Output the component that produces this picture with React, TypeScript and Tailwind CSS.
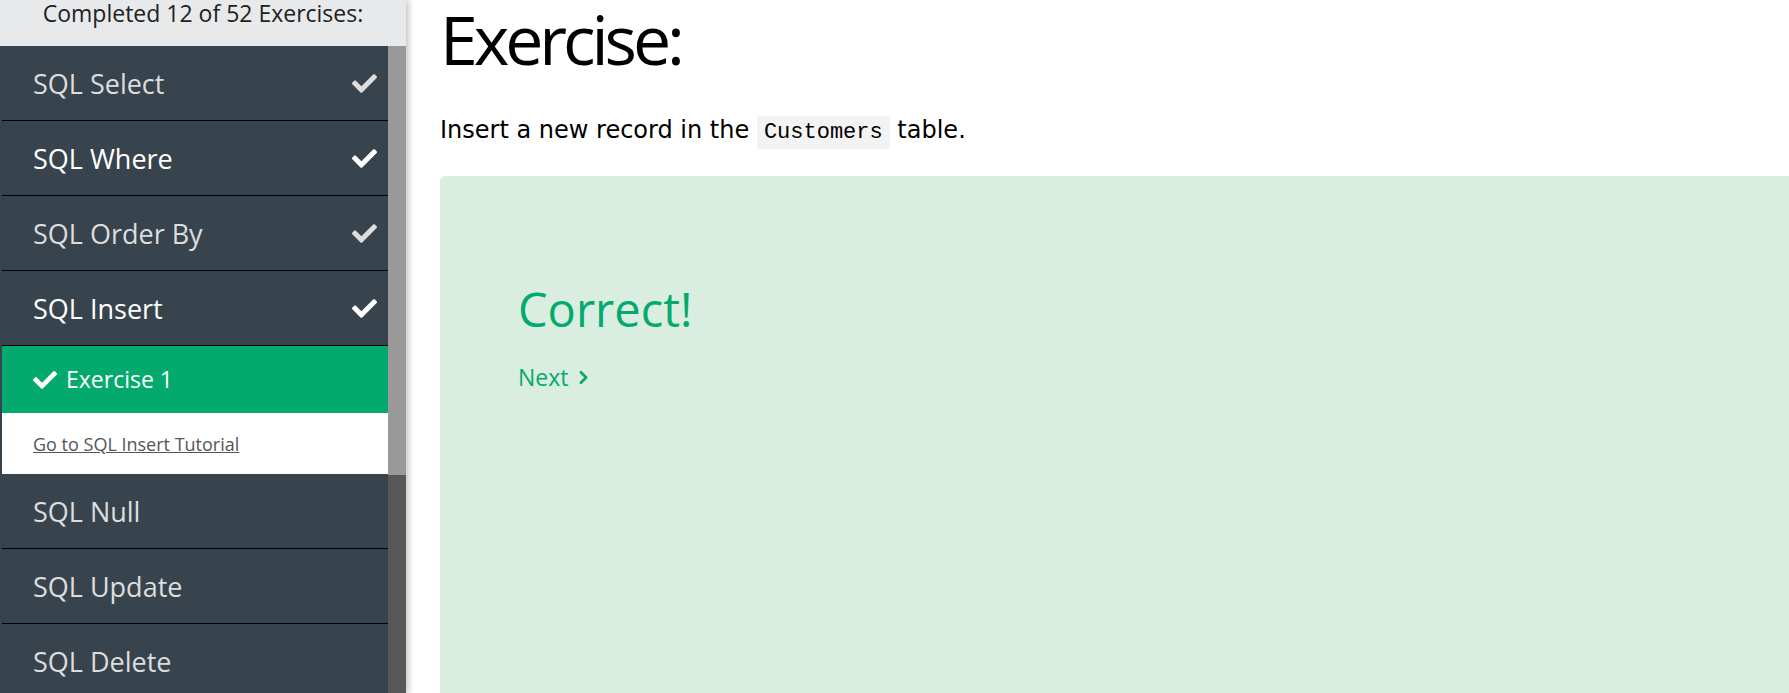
import React from 'react';
import { FaCheck } from 'react-icons/fa';
import { ChevronRight } from 'lucide-react';

const sans = "font-['Open_Sans',sans-serif]";

const chapters = [
  { name: 'SQL Select', done: true, bright: false },
  { name: 'SQL Where', done: true, bright: true },
  { name: 'SQL Order By', done: true, bright: false },
  { name: 'SQL Insert', done: true, bright: true, open: true },
  { name: 'SQL Null', done: false, bright: false },
  { name: 'SQL Update', done: false, bright: false },
  { name: 'SQL Delete', done: false, bright: false },
];

const ChapterRow = ({ chapter }: any) => (
  <div
    className={
      'flex items-center justify-between h-[75px] shrink-0 border-b border-black pl-[31px] pr-[11px] ' +
      (chapter.bright ? 'text-white' : 'text-[#dddddd]')
    }
  >
    <span className="text-[27px] leading-none">{chapter.name}</span>
    {chapter.done && <FaCheck size={25} />}
  </div>
);

export default function App() {
  return (
    <div className={`flex h-[693px] w-full overflow-hidden bg-white ${sans}`}>
      {/* sidebar */}
      <aside className="relative z-10 flex w-[406px] shrink-0 flex-col shadow-[3px_0_6px_rgba(0,0,0,0.22)]">
        <div className="h-[46px] shrink-0 bg-[#e7e9eb] pt-[2px] text-center text-[23px] leading-none text-[#222]">
          Completed 12 of 52 Exercises:
        </div>
        <div className="flex flex-1 min-h-0">
          <div className="flex w-[388px] flex-col bg-[#38444d] pl-[2px]">
            {chapters.map((c) => (
              <React.Fragment key={c.name}>
                <ChapterRow chapter={c} />
                {c.open && (
                  <>
                    <div className="flex h-[67px] shrink-0 items-center gap-[9px] bg-[#04aa6d] pl-[31px] text-white">
                      <FaCheck size={24} />
                      <span className="text-[23px] leading-none">Exercise 1</span>
                    </div>
                    <div className="flex h-[61px] shrink-0 items-center bg-white pl-[31px]">
                      <a href="#" className="text-[18px] leading-none text-[#555] underline">
                        Go to SQL Insert Tutorial
                      </a>
                    </div>
                  </>
                )}
              </React.Fragment>
            ))}
          </div>
          <div className="flex w-[18px] flex-col">
            <div className="h-[429px] bg-[#999999]" />
            <div className="flex-1 bg-[#575757]" />
          </div>
        </div>
      </aside>

      {/* main */}
      <main className="flex flex-1 flex-col pl-[34px] pt-[3px]">
        <h1 className="text-[68px] leading-[72px] tracking-[-0.06em] text-black">Exercise:</h1>
        <p className="mt-[39px] font-['DejaVu_Sans',sans-serif] text-[24px] leading-[32px] text-black">
          Insert a new record in the{' '}
          <code className="bg-[#f3f3f3] px-[7px] py-1 font-['Liberation_Mono',monospace] text-[22px]">Customers</code>{' '}
          table.
        </p>
        <div className="mt-[27px] flex-1 rounded-tl-[5px] bg-[#d9ede1] pl-[78px] pt-[110px]">
          <div className="text-[47px] leading-none text-[#04aa6d]">Correct!</div>
          <a href="#" className="mt-[33px] flex items-center gap-[5px] text-[23px] leading-none text-[#04aa6d]">
            Next
            <ChevronRight size={21} strokeWidth={3} />
          </a>
        </div>
      </main>
    </div>
  );
}
